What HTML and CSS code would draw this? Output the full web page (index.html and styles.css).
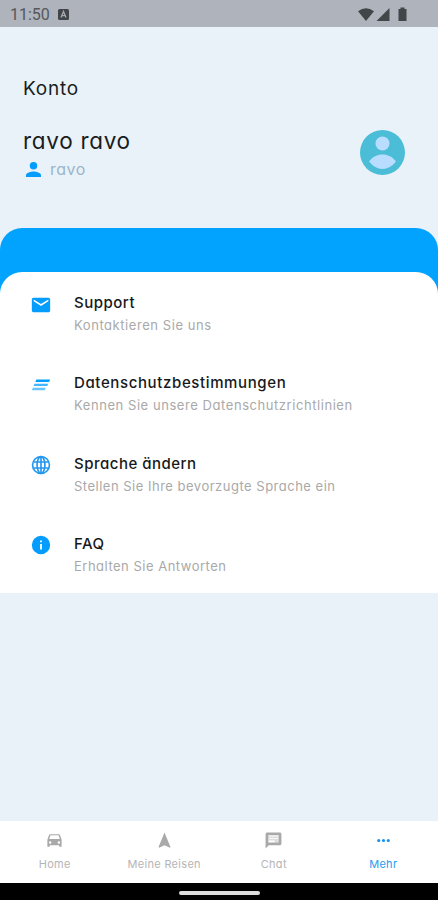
FILE: index.html
```html
<!DOCTYPE html>
<html lang="de">
<head>
<meta charset="utf-8">
<meta name="viewport" content="width=device-width, initial-scale=1">
<title>Konto</title>
<link rel="stylesheet" href="styles.css">
</head>
<body>
<div class="screen">
  <header class="status">
    <span class="clock">11:50</span>
    <svg class="status-app" viewBox="0 0 11 11"><rect width="11" height="11" rx="1.5" fill="#414549"/><path d="M3 8.500 5.500 2.500 8 8.500M4 6.700h3" fill="none" stroke="#a5aab0" stroke-width="1.300"/></svg>
    <svg class="status-icons" viewBox="0 0 50 16" fill="#414649"><path d="M0 4.200Q8 -1.800 16 4.200L8 14Z"/><path d="M31.500 1v13H18.500Z"/><path d="M42.500 0.500h4v1.500h2v12h-8V2h2Z"/></svg>
  </header>
  <main class="content">
    <section class="account">
      <h1 class="title">Konto</h1>
      <div class="profile">
        <div class="identity">
          <h2 class="name">ravo ravo</h2>
          <div class="user">
            <svg class="user-icon" viewBox="4 4 16 16" fill="#049dfd"><circle cx="12" cy="8" r="4"/><path d="M12 14c-2.670 0-8 1.340-8 4v2h16v-2c0-2.660-5.330-4-8-4z"/></svg>
            <span class="username">ravo</span>
          </div>
        </div>
        <svg class="avatar" viewBox="0 0 45 45"><circle cx="22.500" cy="22.500" r="22.500" fill="#4bbdd7"/><circle cx="22.500" cy="13.500" r="7" fill="#b9ddff"/><path d="M9 31.500C13 26.500 17 24.500 22.500 24.500S32 26.500 36 31.500Q30 39 22.500 39T9 31.500Z" fill="#b9ddff"/></svg>
      </div>
    </section>
    <section class="panel">
      <div class="menu">
        <a class="item">
          <svg class="item-icon" viewBox="0 0 24 24"><path d="M20 4H4c-1.100 0-2 .9-2 2v12c0 1.100.9 2 2 2h16c1.100 0 2-.9 2-2V6c0-1.100-.9-2-2-2zm0 4-8 5-8-5V6l8 5 8-5z"/></svg>
          <span class="item-text"><span class="label">Support</span><span class="hint">Kontaktieren Sie uns</span></span>
        </a>
        <a class="item">
          <svg class="item-icon" viewBox="0 0 24 24"><path d="M7 6h15l-1.200 2.600H5.800Z"/><path d="M5 10.500h15l-1.200 2.600H3.800Z" opacity=".75"/><path d="M3.200 15h14L16 17.600H2Z" opacity=".6"/></svg>
          <span class="item-text"><span class="label wide">Datenschutzbestimmungen</span><span class="hint">Kennen Sie unsere Datenschutzrichtlinien</span></span>
        </a>
        <a class="item">
          <svg class="item-icon globe" viewBox="0 0 24 24"><circle cx="12" cy="12" r="9.200"/><ellipse cx="12" cy="12" rx="4.300" ry="9.200"/><path d="M3.500 8.700h17M3.500 15.300h17M12 3v18"/></svg>
          <span class="item-text"><span class="label">Sprache ändern</span><span class="hint tight">Stellen Sie Ihre bevorzugte Sprache ein</span></span>
        </a>
        <a class="item">
          <svg class="item-icon" viewBox="0 0 24 24"><path d="M12 2a10 10 0 1 0 0 20 10 10 0 0 0 0-20zm1 15h-2v-6h2v6zm0-8h-2V7h2v2z"/></svg>
          <span class="item-text"><span class="label">FAQ</span><span class="hint tight">Erhalten Sie Antworten</span></span>
        </a>
      </div>
    </section>
  </main>
  <nav class="tabs">
    <a class="tab"><svg viewBox="0 0 24 24"><path fill-rule="evenodd" d="M18.920 5.010C18.720 4.420 18.160 4 17.500 4h-11c-.66 0-1.210.42-1.420 1.010L3 11v9h3v-2h12v2h3v-9zM6.850 5.500h10.290l1.500 4.500H5.350zM6.500 16a1.500 1.500 0 1 1 0-3 1.500 1.500 0 0 1 0 3zm11 0a1.500 1.500 0 1 1 0-3 1.500 1.500 0 0 1 0 3z"/></svg><span>Home</span></a>
    <a class="tab"><svg viewBox="0 0 24 24"><path d="M12 2 4.500 20.290l.71.71L12 18l6.790 3 .71-.71z"/></svg><span>Meine Reisen</span></a>
    <a class="tab"><svg viewBox="0 0 24 24"><path fill-rule="evenodd" d="M20 2H4c-1.100 0-2 .9-2 2v18l4-4h14c1.100 0 2-.9 2-2V4c0-1.100-.9-2-2-2zM5.500 5.500h13v9h-13z"/><path d="M5.500 7h13v2h-13zm0 3h13v2h-13zm8 2h5v2.500h-5z" opacity=".4"/></svg><span>Chat</span></a>
    <a class="tab active"><svg viewBox="0 0 24 24"><circle cx="6" cy="12" r="2"/><circle cx="12" cy="12" r="2"/><circle cx="18" cy="12" r="2"/></svg><span>Mehr</span></a>
  </nav>
  <footer class="system"><span class="handle"></span></footer>
</div>
</body>
</html>
```
FILE: styles.css
```css
* { box-sizing: border-box; }
body { margin: 0; background: #eaf2f9; font-family: Inter, "Open Sans", sans-serif; font-feature-settings: "cv11"; color: #191d20; }
h1, h2 { margin: 0; font-weight: 400; }
svg { display: block; flex: none; }
.screen { width: 438px; height: 900px; display: flex; flex-direction: column; overflow: hidden; }
.status { height: 27px; background: #afb3bb; display: flex; align-items: center; padding: 2px 30px 0 10px; }
.clock { font: 16px/20px Roboto, sans-serif; color: #54585c; width: 48px; }
.status-app { width: 11px; height: 11px; }
.status-icons { width: 50px; height: 16px; margin-left: auto; }
.content { flex: 1; }
.account { height: 201px; padding: 49px 33px 0 23px; }
.title { font-size: 19px; line-height: 26px; letter-spacing: .75px; }
.profile { display: flex; justify-content: space-between; margin-top: 26px; }
.name { font-size: 22.5px; line-height: 26px; letter-spacing: .7px; }
.user { display: flex; align-items: center; gap: 9px; padding-left: 3px; margin-top: 3px; }
.user-icon { width: 15px; height: 15px; }
.username { font-size: 16px; line-height: 24px; letter-spacing: .5px; color: #9bb6c9; }
.avatar { width: 45px; height: 45px; margin-top: 2px; }
.panel { background: #02a3ff; border-radius: 22px 22px 0 0; padding-top: 44px; }
.menu { background: #fff; border-radius: 22px 22px 0 0; }
.item { display: flex; height: 80.3px; padding: 20px 0 0 30px; }
.item-icon { width: 22px; height: 22px; fill: #049dfd; margin: 1.5px 22px 0 0; }
.globe { fill: none; stroke: #2398f0; stroke-width: 1.800; }
.item-text { display: flex; flex-direction: column; align-items: flex-start; white-space: nowrap; }
.label { font-size: 15px; line-height: 22px; font-weight: 500; color: #16191b; letter-spacing: .5px; }
.wide { letter-spacing: .62px; }
.hint { font-size: 13px; line-height: 22px; color: #a9a9a9; letter-spacing: .56px; }
.tight { letter-spacing: .5px; }
.tabs { height: 62px; background: #fff; display: flex; }
.tab { flex: 1; display: flex; flex-direction: column; align-items: center; padding-top: 10px; font-size: 11px; line-height: 14px; letter-spacing: .3px; color: #b5b5b5; }
.tab svg { width: 19px; height: 19px; fill: #a9a9a9; margin-bottom: 7px; }
.tab.active { color: #279bf2; }
.tab.active svg { fill: #1693f3; }
.system { height: 17px; background: #000; display: flex; justify-content: center; align-items: center; padding-top: 2px; }
.handle { width: 81px; height: 4px; border-radius: 2px; background: #ddd; }
```
